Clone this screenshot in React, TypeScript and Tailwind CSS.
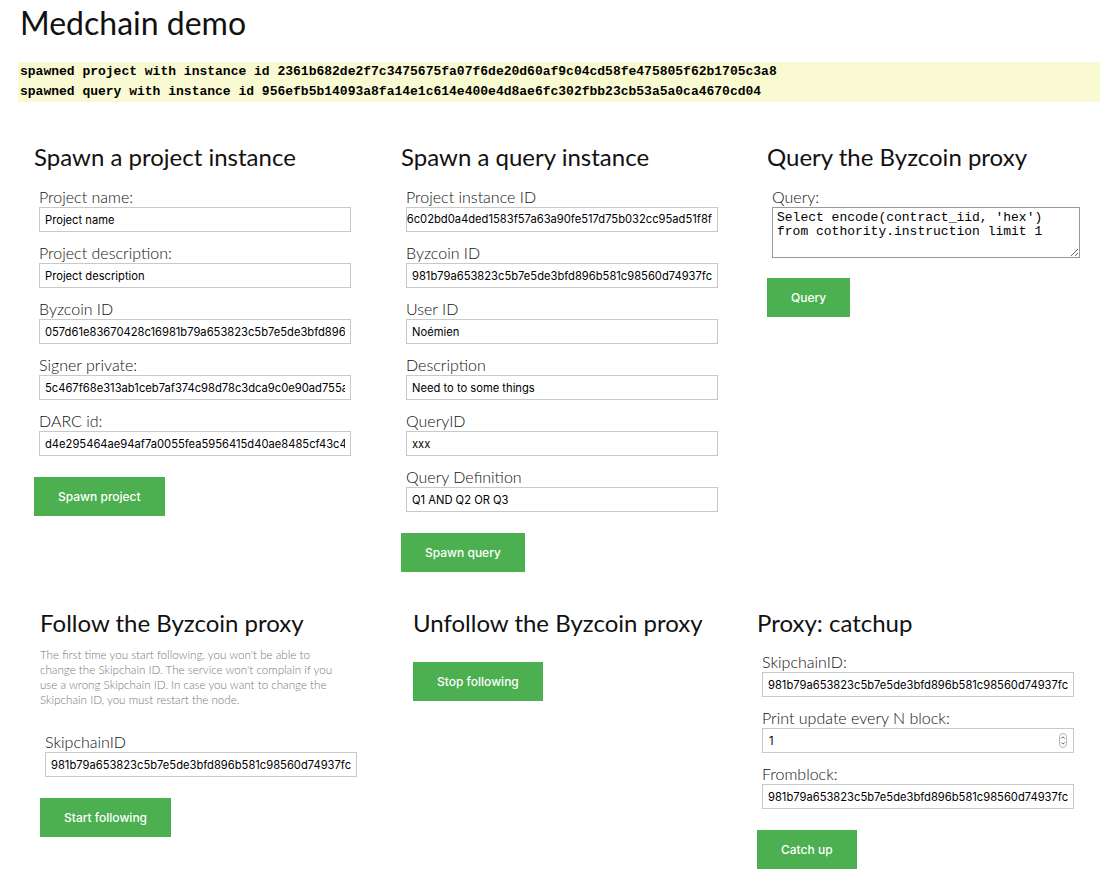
import React from 'react';

const Field = ({ label, value }: { label: string; value: string }) => (
  <div className="mb-[11px]">
    <label className="block text-[16px] leading-[20px] font-light text-[#111]">{label}</label>
    <input
      readOnly
      defaultValue={value}
      className="block h-[25px] w-[312px] border border-[#c9c9c9] bg-white px-[5px] font-['Inter',sans-serif] text-[11.2px] text-black outline-none"
    />
  </div>
);

// value scrolled to its end, the start is cut off at the left border
const ScrolledField = ({ label, value }: { label: string; value: string }) => (
  <div className="mb-[11px]">
    <label className="block text-[16px] leading-[20px] font-light text-[#111]">{label}</label>
    <div className="flex h-[25px] w-[312px] items-center justify-end overflow-hidden whitespace-nowrap border border-[#c9c9c9] bg-white pr-[5px] font-['Inter',sans-serif] text-[11.2px] text-black">
      <span className="shrink-0">{value}</span>
    </div>
  </div>
);

const Btn = ({ children, className = '' }: { children: React.ReactNode; className?: string }) => (
  <button className={`block bg-[#4caf50] px-[24px] py-[12px] font-['Inter',sans-serif] text-[12px] font-medium leading-[15px] text-white ${className}`}>
    {children}
  </button>
);

const Heading = ({ children, className = '' }: { children: React.ReactNode; className?: string }) => (
  <h2 className={`text-[24px] leading-[28px] font-normal text-[#111] ${className}`}>{children}</h2>
);

const SKIP = '981b79a653823c5b7e5de3bfd896b581c98560d74937fc';

export default function App() {
  return (
    <div className="min-h-screen bg-white pb-[17px] font-['Lato',sans-serif] text-[#111]">
      <h1 className="pl-[20px] pt-[4px] text-[32px] leading-[38px] font-normal">Medchain demo</h1>

      <div className="mt-[20px] ml-[18px] mr-[17px] bg-[#fafad2] pl-[2px] font-['Liberation_Mono',monospace] text-[13px] leading-[20px] font-bold text-black">
        <p>spawned project with instance id 2361b682de2f7c3475675fa07f6de20d60af9c04cd58fe475805f62b1705c3a8</p>
        <p>spawned query with instance id 956efb5b14093a8fa14e1c614e400e4d8ae6fc302fbb23cb53a5a0ca4670cd04</p>
      </div>

      <div className="mt-[41px] grid grid-cols-[367px_366px_1fr] pl-[34px]">
        <section>
          <Heading className="mb-[16px]">Spawn a project instance</Heading>
          <div className="ml-[5px]">
            <Field label="Project name:" value="Project name" />
            <Field label="Project description:" value="Project description" />
            <Field label="Byzcoin ID" value="057d61e83670428c16981b79a653823c5b7e5de3bfd896b581c98560d74937fc" />
            <Field label="Signer private:" value="5c467f68e313ab1ceb7af374c98d78c3dca9c0e90ad755a1f0c2" />
            <Field label="DARC id:" value="d4e295464ae94af7a0055fea5956415d40ae8485cf43c4b6e1" />
          </div>
          <Btn className="mt-[21px]">Spawn project</Btn>
        </section>

        <section>
          <Heading className="mb-[16px]">Spawn a query instance</Heading>
          <div className="ml-[5px]">
            <ScrolledField label="Project instance ID" value="2361b682de2f7c3475675fa07f6de20d6c02bd0a4ded1583f57a63a90fe517d75b032cc95ad51f8f" />
            <Field label="Byzcoin ID" value={SKIP} />
            <Field label="User ID" value="Noémien" />
            <Field label="Description" value="Need to to some things" />
            <Field label="QueryID" value="xxx" />
            <Field label="Query Definition" value="Q1 AND Q2 OR Q3" />
          </div>
          <Btn className="mt-[21px]">Spawn query</Btn>
        </section>

        <section>
          <Heading className="mb-[16px]">Query the Byzcoin proxy</Heading>
          <div className="ml-[5px]">
            <label className="block text-[16px] leading-[20px] font-light text-[#111]">Query:</label>
            <textarea
              className="block h-[51px] w-[308px] border border-[#9a9a9a] bg-white px-[4px] pt-[3px] font-['Liberation_Mono',monospace] text-[13px] leading-[14px] text-black outline-none"
              defaultValue={"Select encode(contract_iid, 'hex')\nfrom cothority.instruction limit 1"}
            />
          </div>
          <Btn className="mt-[20px]">Query</Btn>
        </section>
      </div>

      <div className="mt-[37px] grid grid-cols-[373px_344px_1fr] pl-[40px]">
        <section>
          <Heading>Follow the Byzcoin proxy</Heading>
          <p className="mt-[10px] text-[11.6px] leading-[15px] font-light text-[#777]">
            The first time you start following, you won't be able to
            <br />
            change the Skipchain ID. The service won't complain if you
            <br />
            use a wrong Skipchain ID. In case you want to change the
            <br />
            Skipchain ID, you must restart the node.
          </p>
          <div className="mt-[25px] ml-[5px]">
            <Field label="SkipchainID" value={SKIP} />
          </div>
          <Btn className="mt-[21px]">Start following</Btn>
        </section>

        <section>
          <Heading>Unfollow the Byzcoin proxy</Heading>
          <Btn className="mt-[25px]">Stop following</Btn>
        </section>

        <section>
          <Heading className="mb-[15px]">Proxy: catchup</Heading>
          <div className="ml-[5px]">
            <Field label="SkipchainID:" value={SKIP} />
            <div className="mb-[11px]">
              <label className="block text-[16px] leading-[20px] font-light text-[#111]">Print update every N block:</label>
              <div className="relative w-[312px]">
                <input
                  readOnly
                  defaultValue="1"
                  className="block h-[25px] w-[312px] border border-[#c9c9c9] bg-white px-[6px] font-['Inter',sans-serif] text-[11.2px] text-black outline-none"
                />
                <svg className="absolute right-[7px] top-[5px]" width="8" height="15" viewBox="0 0 8 15">
                  <rect x="0.5" y="0.5" width="7" height="14" rx="3.5" fill="white" stroke="#b5b5b5" />
                  <path d="M2.3 5.6 L4 3.8 L5.7 5.6" fill="none" stroke="#555" strokeWidth="0.9" />
                  <path d="M2.3 9.4 L4 11.2 L5.7 9.4" fill="none" stroke="#555" strokeWidth="0.9" />
                </svg>
              </div>
            </div>
            <Field label="Fromblock:" value={SKIP} />
          </div>
          <Btn className="mt-[21px]">Catch up</Btn>
        </section>
      </div>
    </div>
  );
}
